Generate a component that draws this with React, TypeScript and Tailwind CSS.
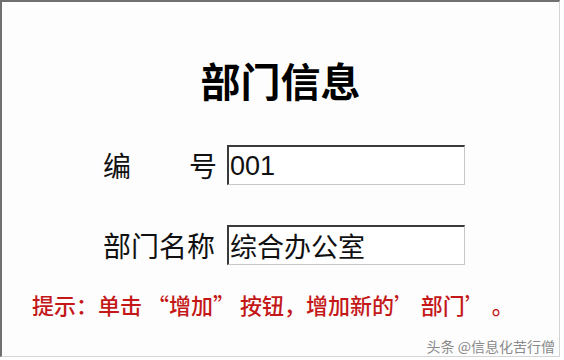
const cjk = { fontFamily: '"Noto Sans CJK SC", "Noto Sans", sans-serif' };

function Field({ label, value, spread }: { label: string; value: string; spread?: boolean }) {
  return (
    <div className="flex items-center pl-[101px]">
      <div className={`w-[114px] flex text-[28px] leading-[32px] text-[#111] ${spread ? "justify-between" : ""}`}>
        {spread ? (
          <>
            <span>{label[0]}</span>
            <span>{label[1]}</span>
          </>
        ) : (
          <span>{label}</span>
        )}
      </div>
      <div className="ml-[10px] w-[238px] h-[40px] flex items-center bg-white border-t-2 border-l-2 border-t-[#3a3a3a] border-l-[#3a3a3a] border-r border-b border-r-[#c8c8c8] border-b-[#c8c8c8]">
        <span
          className="pl-[1px] text-[27px] leading-[32px] text-[#111]"
          style={/^[0-9]+$/.test(value) ? { fontFamily: '"Liberation Sans", "Noto Sans CJK SC", sans-serif' } : undefined}
        >
          {value}
        </span>
      </div>
    </div>
  );
}

export default function App() {
  return (
    <div
      className="w-[560px] h-[357px] flex flex-col bg-[#fdfdfd] border-t-2 border-l-2 border-t-[#707070] border-l-[#707070] border-r border-b border-r-[#d4d4d4] border-b-[#d4d4d4]"
      style={cjk}
    >
      {/* 标题 */}
      <h1 className="mt-[58px] text-center text-[40px] leading-[40px] font-bold text-black">部门信息</h1>

      <div className="mt-[45px]">
        <Field label="编号" value="001" spread />
      </div>
      <div className="mt-[40px]">
        <Field label="部门名称" value="综合办公室" />
      </div>

      <p className="mt-[28px] pl-[30px] text-[22px] leading-[22px] font-medium text-[#c41818] whitespace-pre">
        提示：单击 “增加” 按钮，增加新的’ 部门’ 。
      </p>

      <div className="mt-auto self-end pr-[4px] pb-[1px] text-[14px] leading-[18px] text-[#8a8a8a]">
        头条 @信息化苦行僧
      </div>
    </div>
  );
}
